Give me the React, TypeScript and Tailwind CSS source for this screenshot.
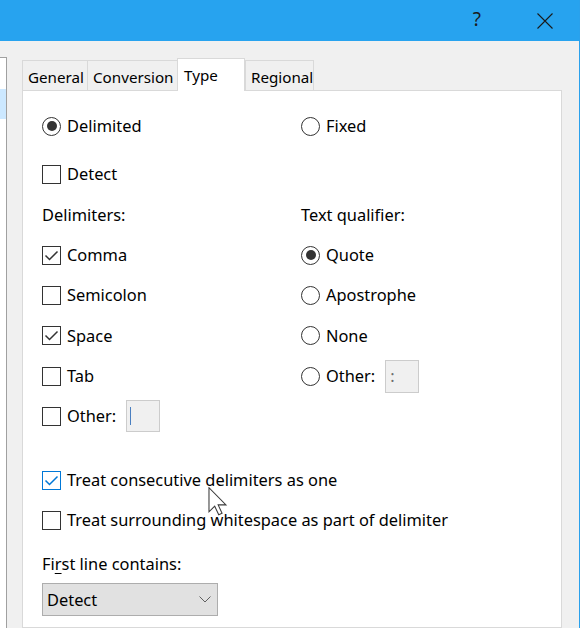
import React from "react";

const font = { fontFamily: '"Noto Sans", "Open Sans", Arial, sans-serif' };

function Check({ on, blue }: { on?: boolean; blue?: boolean }) {
    return (
        <span
            className={`w-[19px] h-[19px] shrink-0 bg-white border flex items-center justify-center ${
                blue ? "border-[#0078d7]" : "border-[#333333]"
            }`}
        >
            {on && (
                <svg width="17" height="17" viewBox="0 0 17 17">
                    <polyline
                        points="2.5,8.5 6.5,12.5 14.5,4.5"
                        fill="none"
                        stroke={blue ? "#0078d7" : "#333333"}
                        strokeWidth="1.5"
                    />
                </svg>
            )}
        </span>
    );
}

function Radio({ on }: { on?: boolean }) {
    return (
        <span className="w-[19px] h-[19px] shrink-0 bg-white border border-[#333333] rounded-full flex items-center justify-center">
            {on && <span className="w-[10px] h-[10px] rounded-full bg-[#333333]" />}
        </span>
    );
}

function Opt({ kind, on, blue, label, children }: { kind: "check" | "radio"; on?: boolean; blue?: boolean; label: string; children?: React.ReactNode }) {
    return (
        <div className="flex items-center gap-[6px]">
            {kind === "check" ? <Check on={on} blue={blue} /> : <Radio on={on} />}
            <span className="leading-[20px] whitespace-nowrap">{label}</span>
            {children}
        </div>
    );
}

function Row({ h, left, right, className = "" }: { h: string; left?: React.ReactNode; right?: React.ReactNode; className?: string }) {
    return (
        <div className={`flex items-center ${h} ${className}`}>
            <div className="w-[259px] shrink-0">{left}</div>
            <div>{right}</div>
        </div>
    );
}

function Tab({ label, active, w, last }: { label: string; active?: boolean; w: string; last?: boolean }) {
    if (active) {
        return (
            <div className={`${w} shrink-0 h-[33px] -mb-px relative z-10 bg-white border-l border-t border-r border-[#d9d9d9] pl-[6px] flex items-center`}>
                <span className="leading-[20px] whitespace-nowrap">{label}</span>
            </div>
        );
    }
    return (
        <div
            className={`${w} shrink-0 h-[30px] bg-[#f0f0f0] border-l border-t border-[#d9d9d9] ${last ? "border-r" : ""} pl-[5px] pt-[3px] flex items-center overflow-hidden`}
        >
            <span className="leading-[20px] whitespace-nowrap">{label}</span>
        </div>
    );
}

export default function App() {
    return (
        <div
            style={font}
            className="w-[580px] h-[628px] overflow-hidden flex flex-col bg-[#f0f0f0] border-r border-[#2aa1ec] text-[16.4px] text-black relative"
        >
            {/* Title bar */}
            <div className="h-[41px] shrink-0 bg-[#27a3ef] flex items-center justify-end">
                <span className="text-[19px] leading-none text-[#1a1a1a] mr-[56px] -mt-[2px]">?</span>
                <svg width="16" height="16" viewBox="0 0 16 16" className="mr-[26px]">
                    <path d="M0.5 0.5 L15.5 15.5 M15.5 0.5 L0.5 15.5" stroke="#1a1a1a" strokeWidth="1.1" />
                </svg>
            </div>

            <div className="flex-1 flex min-h-0">
                {/* list box peeking in from the left */}
                <div className="w-[7px] shrink-0 mt-[16px] bg-white border-t border-r border-[#a0a0a0]">
                    <div className="mt-[31px] h-[30px] bg-[#cce8ff]" />
                </div>

                <div className="ml-[15px] mt-[16px] flex flex-col w-[540px]">
                    {/* Tabs */}
                    <div className="flex items-end h-[33px] text-[15.2px]">
                        <Tab label="General" w="w-[65px]" />
                        <Tab label="Conversion" w="w-[90px]" />
                        <Tab label="Type" w="w-[68px]" active />
                        <Tab label="Regional" w="w-[69px]" last />
                    </div>

                    {/* Panel */}
                    <div className="flex-1 bg-white border border-[#d9d9d9] pl-[19px] pt-[15px]">
                        <Row h="h-[40px]" left={<Opt kind="radio" on label="Delimited" />} right={<Opt kind="radio" label="Fixed" />} />
                        <Row h="h-[40px]" className="mt-[8px]" left={<Opt kind="check" label="Detect" />} />
                        <Row
                            h="h-[38px]"
                            className="mt-[3px] pb-[2px]"
                            left={<span className="leading-[20px]">Delimiters:</span>}
                            right={<span className="leading-[20px]">Text qualifier:</span>}
                        />
                        <Row h="h-[40.3px]" left={<Opt kind="check" on label="Comma" />} right={<Opt kind="radio" on label="Quote" />} />
                        <Row h="h-[40.3px]" left={<Opt kind="check" label="Semicolon" />} right={<Opt kind="radio" label="Apostrophe" />} />
                        <Row h="h-[40.3px]" left={<Opt kind="check" on label="Space" />} right={<Opt kind="radio" label="None" />} />
                        <Row
                            h="h-[40.3px]"
                            left={<Opt kind="check" label="Tab" />}
                            right={
                                <Opt kind="radio" label="Other:">
                                    <span className="ml-[4px] w-[34px] h-[33px] bg-[#f0f0f0] border border-[#cccccc] text-[#6d6d6d] pl-[4px] leading-[30px]">:</span>
                                </Opt>
                            }
                        />
                        <Row
                            h="h-[40.3px]"
                            left={
                                <Opt kind="check" label="Other:">
                                    <span className="ml-[4px] w-[34px] h-[32px] bg-[#f0f0f0] border border-[#cccccc] flex items-center pl-[3px]">
                                        <span className="w-px h-[18px] bg-[#4a7fc0]" />
                                    </span>
                                </Opt>
                            }
                        />
                        <Row h="h-[40px]" className="mt-[24px]" left={<Opt kind="check" on blue label="Treat consecutive delimiters as one" />} />
                        <Row h="h-[40px]" left={<Opt kind="check" label="Treat surrounding whitespace as part of delimiter" />} />
                        <div className="mt-[12px] h-[24px] flex items-center leading-[20px]">
                            Fi<span className="underline underline-offset-[3px]">r</span>st line contains:
                        </div>
                        <div className="mt-[7px] w-[176px] h-[33px] bg-[#e1e1e1] border border-[#adadad] flex items-center justify-between pl-[4px] pr-[6px]">
                            <span className="leading-[20px]">Detect</span>
                            <svg width="12" height="7" viewBox="0 0 12 7">
                                <polyline points="0.5,0.5 6,6 11.5,0.5" fill="none" stroke="#606060" strokeWidth="1" />
                            </svg>
                        </div>
                    </div>
                </div>
            </div>

            {/* mouse pointer */}
            <svg width="20" height="29" viewBox="0 0 13 19.3" className="absolute left-[208px] top-[487px]">
                <path
                    d="M0.5 0.5 L0.5 16.5 L4.3 12.8 L7 18.5 L9.2 17.5 L6.6 11.9 L11.8 11.9 Z"
                    fill="#ffffff"
                    stroke="#3a3a3a"
                    strokeWidth="0.7"
                    strokeLinejoin="miter"
                />
            </svg>
        </div>
    );
}
